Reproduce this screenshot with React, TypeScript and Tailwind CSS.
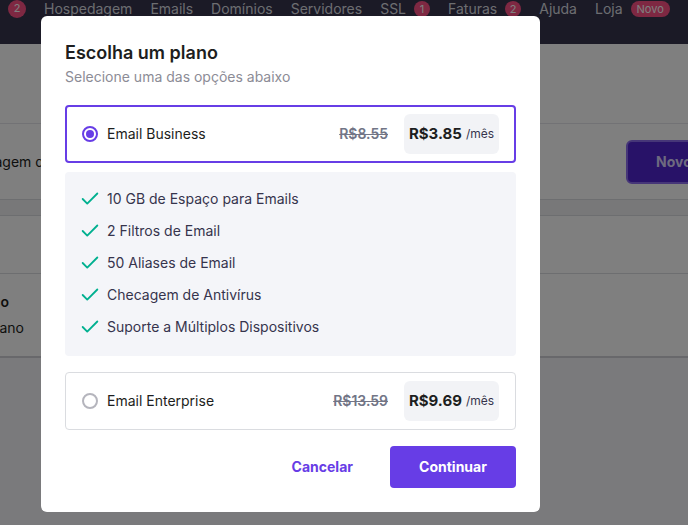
import { Check } from "lucide-react";

const navItems = [
  { label: "Hospedagem" },
  { label: "Emails" },
  { label: "Domínios" },
  { label: "Servidores" },
  { label: "SSL", badge: "1" },
  { label: "Faturas", badge: "2" },
  { label: "Ajuda" },
  { label: "Loja", pill: "Novo" },
];

const features = [
  "10 GB de Espaço para Emails",
  "2 Filtros de Email",
  "50 Aliases de Email",
  "Checagem de Antivírus",
  "Suporte a Múltiplos Dispositivos",
];

function Radio({ checked }: { checked?: boolean }) {
  return checked ? (
    <span className="flex h-4 w-4 items-center justify-center rounded-full border-2 border-[#673de6]">
      <span className="h-2 w-2 rounded-full bg-[#673de6]" />
    </span>
  ) : (
    <span className="h-4 w-4 rounded-full border-2 border-[#b5b5bd]" />
  );
}

function PlanRow({
  name,
  oldPrice,
  price,
  checked,
}: {
  name: string;
  oldPrice: string;
  price: string;
  checked?: boolean;
}) {
  return (
    <div
      className={
        checked
          ? "flex h-[58px] items-center rounded border-2 border-[#673de6] pl-[15px] pr-[15px]"
          : "flex h-[58px] items-center rounded border border-[#dadce0] pl-[16px] pr-[16px]"
      }
    >
      <Radio checked={checked} />
      <span className="ml-[9px] text-sm text-[#1d1e20]">{name}</span>
      <span className="ml-auto text-sm font-semibold text-[#727586] line-through">
        {oldPrice}
      </span>
      <div className="ml-4 flex h-[40px] w-[95px] items-center justify-center rounded-md bg-[#f2f3f6]">
        <span className="text-[15px] font-bold text-[#1d1e20]">{price}</span>
        <span className="ml-1 text-xs text-[#36344d]">/mês</span>
      </div>
    </div>
  );
}

export default function App() {
  return (
    <div className="relative h-[525px] w-full overflow-hidden bg-[#f4f4f8] font-['Inter',sans-serif]">
      {/* Page behind */}
      <nav className="flex h-[44px] items-start gap-[18px] bg-[#36344d] pl-2 text-sm text-[#dadce0]">
        <span className="flex h-[18px] w-[18px] items-center justify-center rounded-full bg-[#fc5185] text-[11px] text-white">
          2
        </span>
        {navItems.map((item) => (
          <span key={item.label} className="flex h-[18px] items-center gap-2 leading-[18px]">
            {item.label}
            {item.badge && (
              <span className="flex h-[16px] w-[16px] items-center justify-center rounded-full bg-[#fc5185] text-[11px] text-white">
                {item.badge}
              </span>
            )}
            {item.pill && (
              <span className="flex h-[16px] items-center rounded-full bg-[#fc5185] px-1.5 text-[11px] text-white">
                {item.pill}
              </span>
            )}
          </span>
        ))}
      </nav>
      <div className="h-[80px] border-b border-[#e4e4ea] bg-white" />
      <div className="flex h-[76px] items-center justify-between border-b border-[#dadce0] bg-white">
        <span className="-ml-[57px] text-sm text-[#1d1e20]">Hospedagem de email</span>
        <span className="-mr-[20px] flex h-[44px] w-[82px] items-center rounded-md border-2 border-[#8c6cf0] bg-[#5025d1] pl-[28px] text-sm font-bold text-[#dcd4ff]">
          Novo
        </span>
      </div>
      <div className="h-[16px] border-b border-[#dadce0] bg-[#f0f0f2]" />
      <div className="h-[58px] border-b border-[#dadce0] bg-white" />
      <div className="flex h-[84px] flex-col justify-center gap-[6px] border-b-2 border-[#d0d0d6] bg-white">
        <div className="flex w-[9px] justify-end whitespace-nowrap">
          <span className="text-sm font-semibold text-[#1d1e20]">Email Básico</span>
        </div>
        <div className="flex w-[24px] justify-end whitespace-nowrap">
          <span className="text-sm text-[#1d1e20]">Seu plano</span>
        </div>
      </div>

      {/* Overlay */}
      <div className="absolute inset-0 bg-black/50" />

      {/* Modal */}
      <div className="absolute left-[41px] top-[16px] w-[499px] rounded-md bg-white px-6 pt-[27px] pb-6">
        <h2 className="text-lg font-semibold leading-5 text-[#1d1e20]">Escolha um plano</h2>
        <p className="mt-[4px] text-sm leading-5 text-[#8c8c96]">Selecione uma das opções abaixo</p>

        <div className="mt-[18px]">
          <PlanRow name="Email Business" oldPrice="R$8.55" price="R$3.85" checked />
        </div>

        <ul className="mt-[9px] flex flex-col gap-[12px] rounded bg-[#f4f5f9] px-[14px] pt-[17px] pb-[19px]">
          {features.map((f) => (
            <li key={f} className="flex h-5 items-center gap-[6px] text-sm text-[#36344d]">
              <Check className="h-[22px] w-[22px] text-[#00b090]" strokeWidth={2} aria-hidden />
              {f}
            </li>
          ))}
        </ul>

        <div className="mt-4">
          <PlanRow name="Email Enterprise" oldPrice="R$13.59" price="R$9.69" />
        </div>

        <div className="mt-4 flex items-center justify-end gap-[37px]">
          <button className="text-sm font-bold text-[#673de6]">Cancelar</button>
          <button className="h-[42px] w-[126px] rounded bg-[#673de6] text-sm font-bold text-white">
            Continuar
          </button>
        </div>
      </div>
    </div>
  );
}
